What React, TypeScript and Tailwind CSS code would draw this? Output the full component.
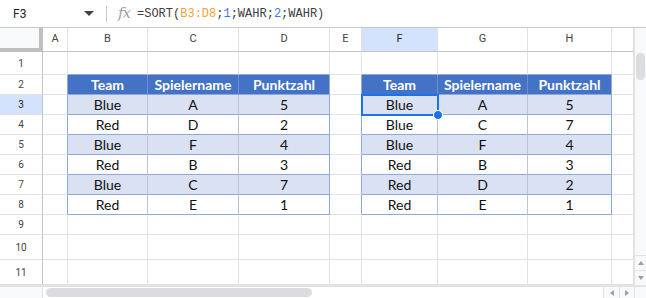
const COLS = ["A", "B", "C", "D", "E", "F", "G", "H", ""];

const LEFT = [
  ["Team", "Spielername", "Punktzahl"],
  ["Blue", "A", "5"],
  ["Red", "D", "2"],
  ["Blue", "F", "4"],
  ["Red", "B", "3"],
  ["Blue", "C", "7"],
  ["Red", "E", "1"],
];

const RIGHT = [
  ["Team", "Spielername", "Punktzahl"],
  ["Blue", "A", "5"],
  ["Blue", "C", "7"],
  ["Blue", "F", "4"],
  ["Red", "B", "3"],
  ["Red", "D", "2"],
  ["Red", "E", "1"],
];

const ROWS = [1, 2, 3, 4, 5, 6, 7, 8, 9, 10, 11];

function cellText(r: number, c: number) {
  if (r < 2 || r > 8) return "";
  if (c >= 2 && c <= 4) return LEFT[r - 2][c - 2];
  if (c >= 6 && c <= 8) return RIGHT[r - 2][c - 6];
  return "";
}

const Cell = ({ r, c }: { r: number; c: number }) => {
  const tableCol = (c >= 2 && c <= 4) || (c >= 6 && c <= 8);
  const tableRow = r >= 2 && r <= 8;
  const inTable = tableCol && tableRow;

  let bg = "bg-white";
  if (inTable && r === 2) bg = "bg-[#4472c4]";
  else if (inTable && r % 2 === 1) bg = "bg-[#d9e1f2]";

  let right = "border-r-[#e2e2e2]";
  if (inTable) {
    if (c === 4 || c === 8) right = "border-r-[#8eaadb]";
    else if (r === 2) right = "border-r-[#6b8fd2]";
    else right = "border-r-[#b9c4dc]";
  } else if (tableRow && (c === 1 || c === 5)) {
    right = "border-r-[#8eaadb]";
  }

  let bottom = "border-b-[#e2e2e2]";
  if (inTable || (r === 1 && tableCol)) bottom = "border-b-[#8eaadb]";

  const text =
    inTable && r === 2 ? "text-white font-bold" : "text-[#111]";

  return (
    <div
      className={`flex items-center justify-center border-r border-b ${right} ${bottom} ${bg} ${text} font-['Lato',sans-serif] text-[14px] leading-none`}
    >
      {cellText(r, c)}
    </div>
  );
};

export default function App() {
  return (
    <div className="w-[646px] h-[298px] overflow-hidden bg-white flex flex-col font-['Roboto',sans-serif]">
      {/* formula bar */}
      <div className="h-[28px] flex items-center border-b border-[#c7c7c7] text-[#1f1f1f]">
        <div className="w-[80px] pl-[13px] text-[12px]">F3</div>
        <svg width="10" height="6" viewBox="0 0 10 6" className="ml-[4px]">
          <path d="M0 0 L10 0 L5 5 Z" fill="#444" />
        </svg>
        <div className="ml-[12px] w-px h-[16px] bg-[#c7c7c7]" />
        <div className="ml-[11px] font-['DejaVu_Serif',serif] italic text-[15px] text-[#9aa0a6] tracking-[-1px]">
          fx
        </div>
        <div className="ml-[7px] font-['Liberation_Mono',monospace] text-[12px] text-[#3c4043]">
          =SORT(<span className="text-[#f4a43b]">B3:D8</span>;
          <span className="text-[#3b78e7]">1</span>;WAHR;
          <span className="text-[#3b78e7]">2</span>;WAHR)
        </div>
      </div>

      <div className="flex">
        {/* sheet grid */}
        <div className="relative grid grid-cols-[43px_25px_80px_91px_91px_32px_76px_90px_84px_22px] grid-rows-[24px_23px_20px_20px_20px_20px_20px_20px_20px_20px_25px_25px]">
          <div className="bg-[#f8f9fa] border-r-4 border-b-4 border-[#c0c0c0]" />
          {COLS.map((name, i) => (
            <div
              key={i}
              className={`flex items-center justify-center border-r border-b border-r-[#e2e2e2] border-b-[#c4c4c4] text-[11px] ${
                name === "F" ? "bg-[#d3e3fd] text-[#1f1f1f]" : "bg-white text-[#444]"
              }`}
            >
              {name}
            </div>
          ))}
          {ROWS.map((r) => (
            <>
              <div
                key={`h${r}`}
                className={`flex items-center justify-center border-r border-b border-r-[#c4c4c4] border-b-[#e2e2e2] text-[10px] ${
                  r === 3 ? "bg-[#d3e3fd] text-[#1f1f1f]" : "bg-white text-[#444]"
                }`}
              >
                {r}
              </div>
              {COLS.map((_, i) => (
                <Cell key={`${r}-${i}`} r={r} c={i + 1} />
              ))}
            </>
          ))}
          {/* active cell F3 */}
          <div className="absolute left-[361px] top-[66px] w-[78px] h-[22px] border-2 border-[#1a73e8]" />
          <div className="absolute left-[433px] top-[82px] w-[10px] h-[10px] rounded-full bg-[#1a73e8] border border-white" />
        </div>

        {/* vertical scrollbar */}
        <div className="w-[12px] h-[257px] bg-[#f8f9fa] border-l border-[#e2e2e2] flex flex-col">
          <div className="mt-[25px] mx-auto w-[9px] h-[27px] rounded-full bg-[#dadce0]" />
          <div className="flex-1" />
          <div className="h-[15px] flex items-center justify-center border-t border-[#e2e2e2]">
            <svg width="6" height="4" viewBox="0 0 6 4">
              <path d="M0 4 L6 4 L3 0 Z" fill="#9e9e9e" />
            </svg>
          </div>
          <div className="h-[15px] flex items-center justify-center border-t border-[#e2e2e2]">
            <svg width="6" height="4" viewBox="0 0 6 4">
              <path d="M0 0 L6 0 L3 4 Z" fill="#9e9e9e" />
            </svg>
          </div>
        </div>
      </div>

      {/* horizontal scrollbar */}
      <div className="h-[13px] flex border-t-2 border-[#e2e2e2] bg-white">
        <div className="w-[43px] bg-[#f8f9fa] border-r border-[#e2e2e2]" />
        <div className="flex-1 flex items-center pl-[3px]">
          <div className="w-[266px] h-[9px] rounded-full bg-[#dadce0]" />
        </div>
        <div className="w-[16px] flex items-center justify-center bg-[#f8f9fa] border-l border-[#e2e2e2]">
          <svg width="4" height="6" viewBox="0 0 4 6">
            <path d="M4 0 L4 6 L0 3 Z" fill="#9e9e9e" />
          </svg>
        </div>
        <div className="w-[15px] flex items-center justify-center bg-[#f8f9fa] border-l border-[#e2e2e2]">
          <svg width="4" height="6" viewBox="0 0 4 6">
            <path d="M0 0 L0 6 L4 3 Z" fill="#9e9e9e" />
          </svg>
        </div>
        <div className="w-[12px] bg-[#f8f9fa] border-l border-[#e2e2e2]" />
      </div>
    </div>
  );
}
